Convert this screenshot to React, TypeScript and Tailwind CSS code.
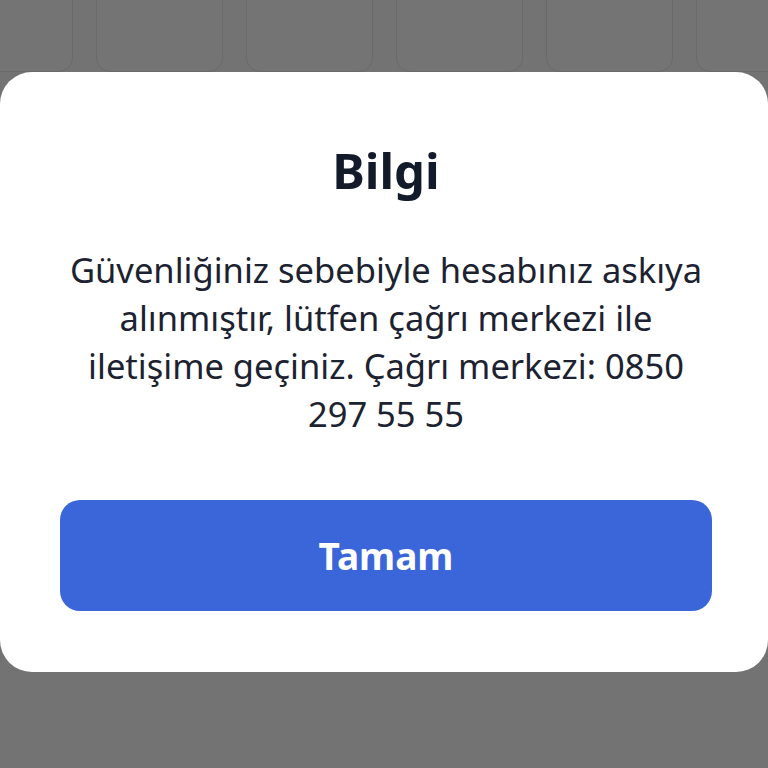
export default function App() {
  const tiles = [0, 1, 2, 3, 4, 5];

  return (
    <div className="relative h-[768px] w-[768px] overflow-hidden bg-[#737373] font-['Noto_Sans',sans-serif]">
      <div className="ml-[-54px] flex h-[72px] items-end gap-[23px]">
        {tiles.map((t) => (
          <div
            key={t}
            className="h-[100px] w-[127px] shrink-0 rounded-b-[14px] border border-[#6a6a6a] bg-[#747474]"
          />
        ))}
      </div>

      <div className="flex h-[600px] w-[768px] flex-col items-center rounded-[32px] bg-white pl-[60px] pr-[56px] pt-[70px]">
        <h1 className="text-[49px] font-bold leading-[56px] text-[#131a2a]">Bilgi</h1>
        <p className="mt-[48px] text-center text-[34.5px] leading-[48px] text-[#1c2230]">
          Güvenliğiniz sebebiyle hesabınız askıya alınmıştır, lütfen çağrı merkezi ile iletişime geçiniz. Çağrı merkezi: 0850 297 55 55
        </p>
        <button className="mt-[62px] flex h-[111px] w-[652px] shrink-0 items-center justify-center rounded-[20px] bg-[#3b66d9] text-[37px] font-bold text-white">
          Tamam
        </button>
      </div>
    </div>
  );
}
